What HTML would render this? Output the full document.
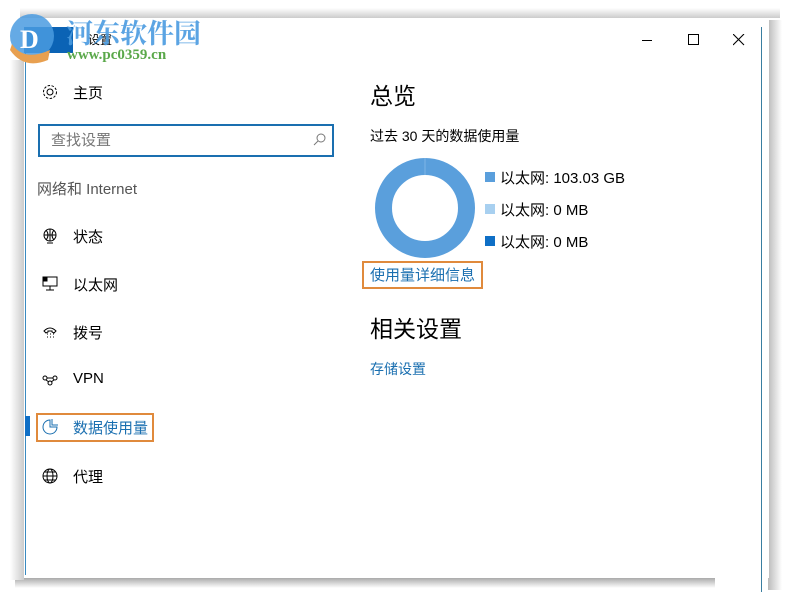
<!DOCTYPE html>
<html><head><meta charset="utf-8"><style>
body{margin:0;width:790px;height:597px;background:#fff;position:relative;overflow:hidden;font-family:"Liberation Sans","Noto Sans CJK SC",sans-serif;color:#000}
.abs{position:absolute}
.shadowR{left:768px;top:20px;width:14px;height:570px;background:linear-gradient(to right,#bbb,#fff)}
.shadowT{left:20px;top:8px;width:760px;height:10px;background:linear-gradient(to bottom,#fff,#ccc)}
.shadowB{left:15px;top:578px;width:700px;height:10px;background:linear-gradient(to bottom,#aaa,#fff)}
.shadowL{left:10px;top:60px;width:14px;height:520px;background:linear-gradient(to left,#ccc,#fff)}
.win{left:24px;top:18px;width:745px;height:560px;background:#fff}
.t{font-size:15px;white-space:nowrap}
.nav{font-size:15px;left:73px}
.ic{left:41px;width:18px;height:18px}
</style></head><body>
<div class="abs shadowT"></div><div class="abs shadowR"></div><div class="abs shadowB"></div><div class="abs shadowL"></div>
<div class="abs win"></div>
<div class="abs" style="left:25px;top:40px;width:1px;height:535px;background:#3a8ac0"></div>
<div class="abs" style="left:761px;top:27px;width:1px;height:565px;background:#3a7ea0"></div>
<div class="abs" style="left:24px;top:27px;width:49px;height:26px;background:#0b63b5"></div>
<div class="abs t" style="left:88px;top:31px;font-size:12px">设置</div>
<svg class="abs" style="left:4px;top:10px" width="60" height="56"><circle cx="28" cy="26" r="22" fill="#4a9be0" opacity=".85"/><path d="M8 34 Q20 52 46 40 L44 50 Q20 60 6 40Z" fill="#e8a050"/><text x="16" y="38" font-size="26" font-weight="bold" fill="#fff" font-family="Liberation Serif">D</text></svg>
<div class="abs" style="left:66px;top:12px;font-size:27px;font-weight:bold;color:#4a9be0;font-family:'Noto Serif CJK SC',serif;opacity:.9">河东软件园</div>
<div class="abs" style="left:67px;top:47px;font-size:15px;font-weight:bold;color:#5aa84a;font-family:'Liberation Serif',serif">www.pc0359.cn</div>
<div class="abs" style="left:642px;top:40px;width:10px;height:1px;background:#000"></div>
<div class="abs" style="left:688px;top:34px;width:9px;height:9px;border:1px solid #000"></div>
<svg class="abs" style="left:733px;top:34px" width="12" height="12"><path d="M0 0L11 11M11 0L0 11" stroke="#000" stroke-width="1.1"/></svg>
<svg class="abs ic" style="top:83px" viewBox="0 0 18 18"><circle cx="9" cy="9" r="3" fill="none" stroke="#000"/><circle cx="9" cy="9" r="6.5" fill="none" stroke="#000" stroke-dasharray="2.5 1.5"/></svg>
<div class="abs nav" style="top:82px">主页</div>
<div class="abs" style="left:38px;top:124px;width:292px;height:29px;border:2px solid #1a6fb0"></div>
<div class="abs t" style="left:51px;top:129px;color:#777">查找设置</div>
<svg class="abs" style="left:313px;top:133px" width="14" height="14"><circle cx="8" cy="5" r="4" fill="none" stroke="#777"/><path d="M5 8L1 12" stroke="#777"/></svg>
<div class="abs t" style="left:37px;top:178px;color:#555">网络和 Internet</div>
<svg class="abs ic" style="top:227px" viewBox="0 0 18 18" fill="none" stroke="#000"><circle cx="9" cy="8" r="6"/><path d="M3 8h12M9 2v12M5 3q4 5 0 10M13 3q-4 5 0 10M6 16h6"/></svg>
<div class="abs nav" style="top:226px">状态</div>
<svg class="abs ic" style="top:275px" viewBox="0 0 18 18" fill="none" stroke="#000"><rect x="2" y="2" width="14" height="9"/><path d="M9 11v4M5 15h8"/><rect x="2" y="2" width="4" height="4" fill="#000"/></svg>
<div class="abs nav" style="top:274px">以太网</div>
<svg class="abs ic" style="top:323px" viewBox="0 0 18 18" fill="none" stroke="#000"><path d="M3 8q6-6 12 0l-2 2-2-1v-1h-4v1l-2 1z"/><path d="M6 11h1M9 11h1M12 11h1M6 14h1M9 14h1M12 14h1" stroke-dasharray="1 1"/></svg>
<div class="abs nav" style="top:322px">拨号</div>
<svg class="abs ic" style="top:371px" viewBox="0 0 18 18" fill="none" stroke="#000"><circle cx="4" cy="7" r="2"/><circle cx="14" cy="7" r="2"/><circle cx="9" cy="12" r="2"/><path d="M6 7h6M5 9l3 2M13 9l-3 2"/></svg>
<div class="abs nav" style="top:370px">VPN</div>
<div class="abs" style="left:25px;top:416px;width:5px;height:20px;background:#0f6fc6"></div>
<div class="abs" style="left:36px;top:413px;width:114px;height:25px;border:2px solid #e08a3c"></div>
<svg class="abs ic" style="top:418px" viewBox="0 0 18 18" fill="none" stroke="#1a6fb0"><path d="M9 2A7 7 0 1 0 16 9H9Z"/><path d="M11 1v6h6"/></svg>
<div class="abs nav" style="top:417px;color:#1a6fb0">数据使用量</div>
<svg class="abs ic" style="top:467px" viewBox="0 0 18 18" fill="none" stroke="#000"><circle cx="9" cy="9" r="7"/><ellipse cx="9" cy="9" rx="3" ry="7"/><path d="M2 9h14M3 5h12M3 13h12"/></svg>
<div class="abs nav" style="top:466px">代理</div>
<div class="abs" style="left:370px;top:77px;font-size:23px">总览</div>
<div class="abs t" style="left:370px;top:126px;font-size:14px">过去 30 天的数据使用量</div>
<svg class="abs" style="left:374px;top:157px" width="102" height="102"><circle cx="51" cy="51" r="41.5" fill="none" stroke="#5a9fdc" stroke-width="17"/><path d="M51 1v17" stroke="#7fb6e6" stroke-width="1"/></svg>
<div class="abs" style="left:485px;top:172px;width:10px;height:10px;background:#5a9fdc"></div>
<div class="abs t" style="left:500px;top:167px">以太网: 103.03 GB</div>
<div class="abs" style="left:485px;top:204px;width:10px;height:10px;background:#a8d0f0"></div>
<div class="abs t" style="left:500px;top:199px">以太网: 0 MB</div>
<div class="abs" style="left:485px;top:236px;width:10px;height:10px;background:#0f6fc6"></div>
<div class="abs t" style="left:500px;top:231px">以太网: 0 MB</div>
<div class="abs" style="left:362px;top:261px;width:117px;height:24px;border:2px solid #e08a3c"></div>
<div class="abs t" style="left:370px;top:264px;color:#1a6fb0">使用量详细信息</div>
<div class="abs" style="left:370px;top:310px;font-size:23px">相关设置</div>
<div class="abs t" style="left:370px;top:359px;color:#1a6fb0;font-size:14px">存储设置</div>
</body></html>
